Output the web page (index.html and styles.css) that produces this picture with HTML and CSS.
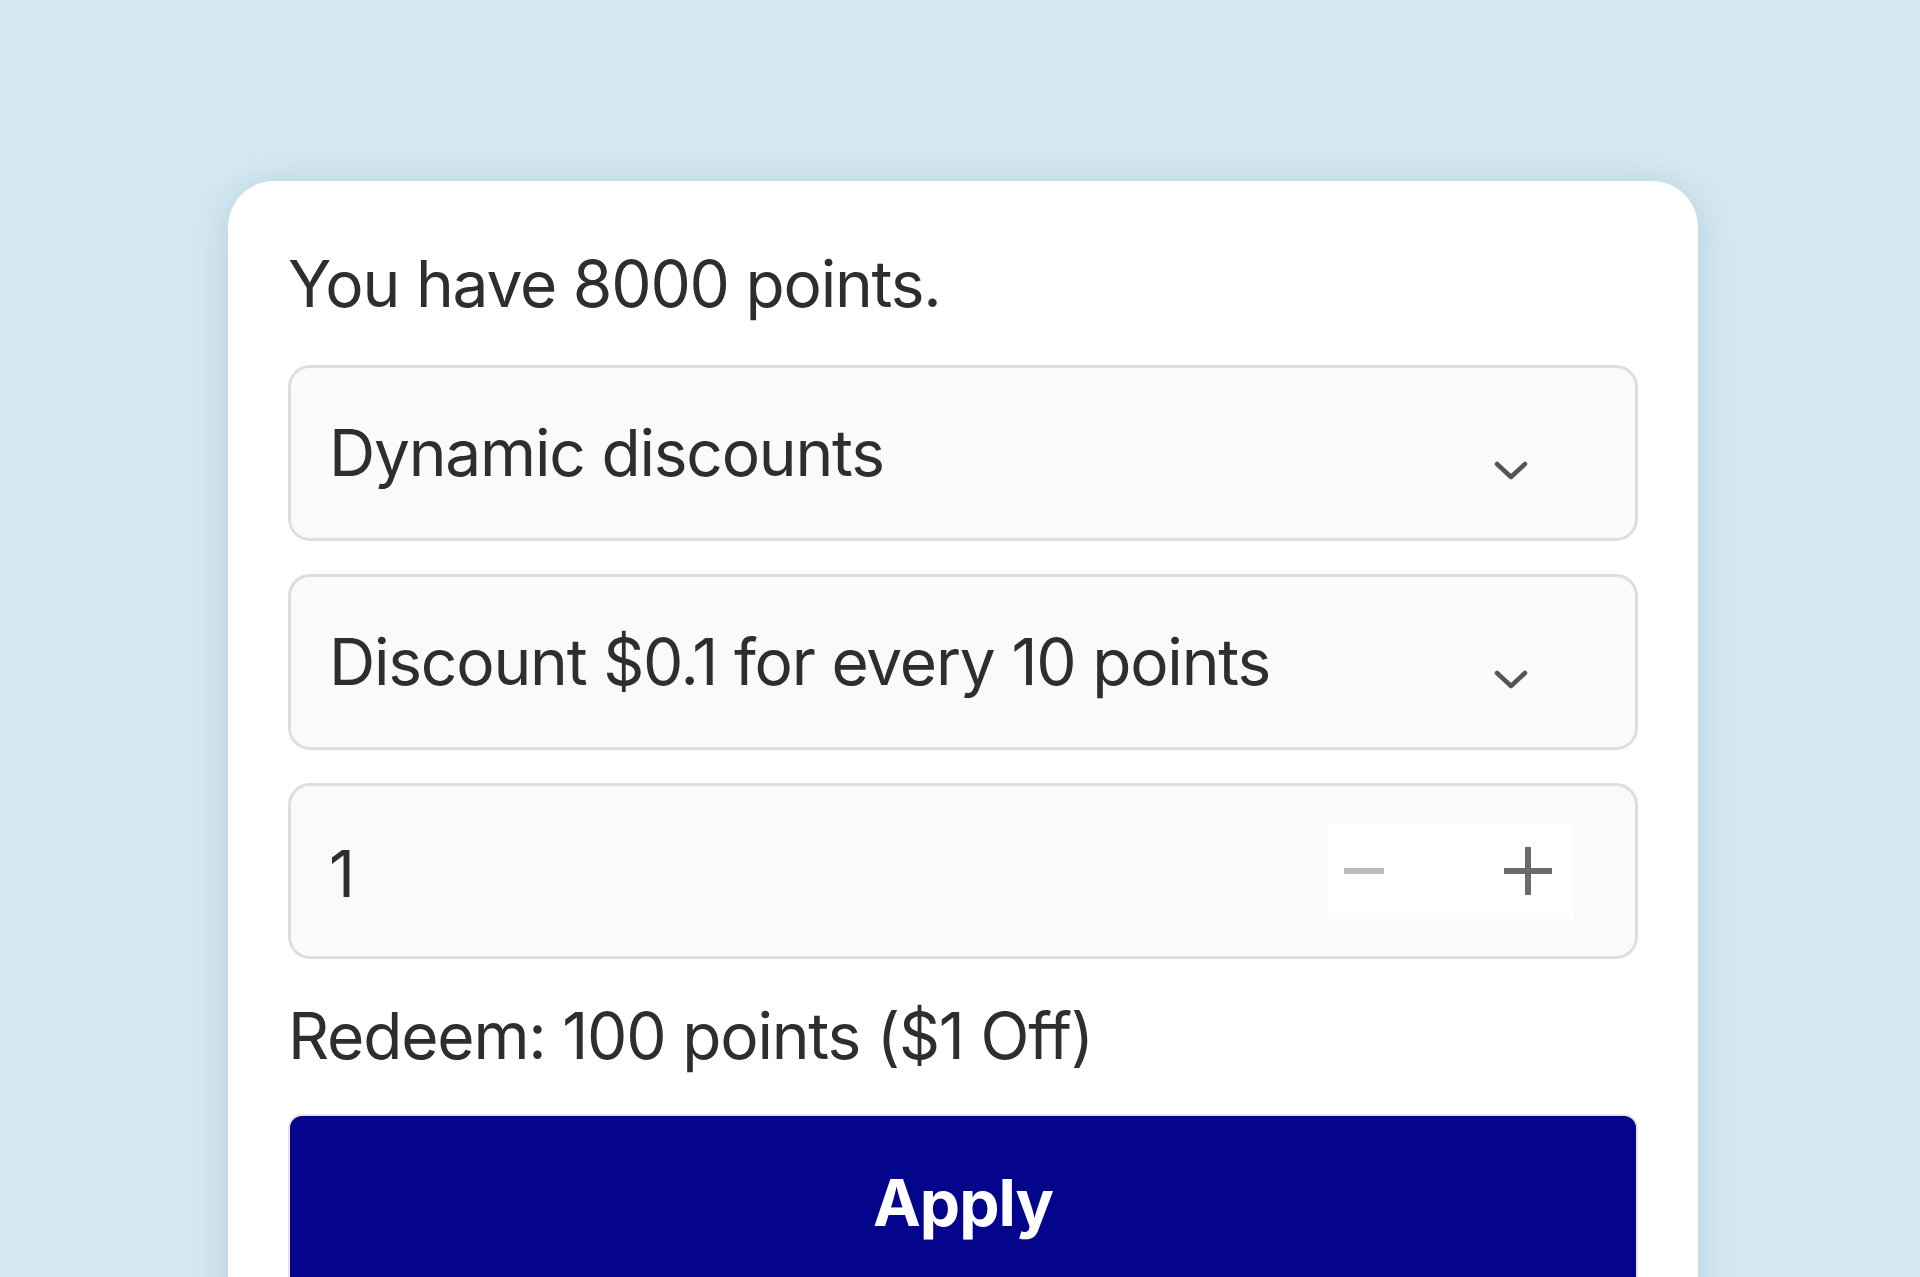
FILE: index.html
```html
<!DOCTYPE html>
<html lang="en">
<head>
<meta charset="utf-8">
<title>Redeem points</title>
<link rel="stylesheet" href="styles.css">
</head>
<body>
<div class="page">
  <div class="card">
    <p class="balance">You have 8000 points.</p>
    <div class="field select">
      <span class="field-text">Dynamic discounts</span>
      <svg class="chevron" width="34" height="20" viewBox="0 0 34 20"><path d="M3 3 L17 16 L31 3" fill="none" stroke="#555" stroke-width="4.5" stroke-linecap="round" stroke-linejoin="round"/></svg>
    </div>
    <div class="field select">
      <span class="field-text">Discount $0.1 for every 10 points</span>
      <svg class="chevron" width="34" height="20" viewBox="0 0 34 20"><path d="M3 3 L17 16 L31 3" fill="none" stroke="#555" stroke-width="4.5" stroke-linecap="round" stroke-linejoin="round"/></svg>
    </div>
    <div class="field qty">
      <span class="field-text qty-value">1</span>
      <div class="stepper">
        <span class="step minus"></span>
        <span class="step plus"></span>
      </div>
    </div>
    <p class="redeem">Redeem: 100 points ($1 Off)</p>
    <button class="apply">Apply</button>
  </div>
</div>
</body>
</html>
```
FILE: styles.css
```css
html, body {
  margin: 0;
  padding: 0;
  background: #d5e9f3;
  overflow: hidden;
}
.page {
  height: 1277px;
  padding: 181px 222px 0 228px;
  box-sizing: border-box;
  overflow: hidden;
}
.card {
  background: #fff;
  border-radius: 46px;
  padding: 63px 60px 80px 60px;
  box-shadow: 0 4px 36px rgba(60, 100, 130, 0.22);
  font-family: Inter, "Noto Sans", sans-serif;
  color: #2e2e2e;
  font-size: 64px;
  line-height: 80px;
  letter-spacing: -1.2px;
}
.balance {
  margin: 0 0 41px 0;
}
.field {
  display: flex;
  align-items: center;
  height: 176px;
  box-sizing: border-box;
  border: 3px solid #dedede;
  border-radius: 22px;
  background: #fafafa;
  padding: 0 107px 0 38px;
  margin-bottom: 33px;
}
.field-text {
  flex: 1;
}
.qty-value {
  padding-top: 6px;
}
.chevron {
  margin-top: 36px;
  display: block;
}
.qty {
  padding-right: 62px;
  margin-bottom: 0;
}
.stepper {
  display: flex;
  align-items: center;
  gap: 120px;
  background: #fff;
  height: 96px;
  padding: 0 21px 0 17px;
}
.step {
  position: relative;
  display: block;
}
.minus {
  width: 40px;
  height: 6px;
  background: #bcbcbc;
}
.plus {
  width: 48px;
  height: 48px;
}
.plus::before, .plus::after {
  content: "";
  position: absolute;
  background: #6b6b6b;
}
.plus::before {
  left: 0;
  top: 21px;
  width: 48px;
  height: 6px;
}
.plus::after {
  left: 21px;
  top: 0;
  width: 6px;
  height: 48px;
}
.redeem {
  margin: 37px 0 38px 0;
}
.apply {
  display: block;
  width: 100%;
  height: 176px;
  border: 2px solid #e6e6e6;
  border-radius: 14px;
  background: #05058c;
  color: #fff;
  font-family: Inter, "Noto Sans", sans-serif;
  font-size: 64px;
  font-weight: 700;
  letter-spacing: -1px;
}
```
